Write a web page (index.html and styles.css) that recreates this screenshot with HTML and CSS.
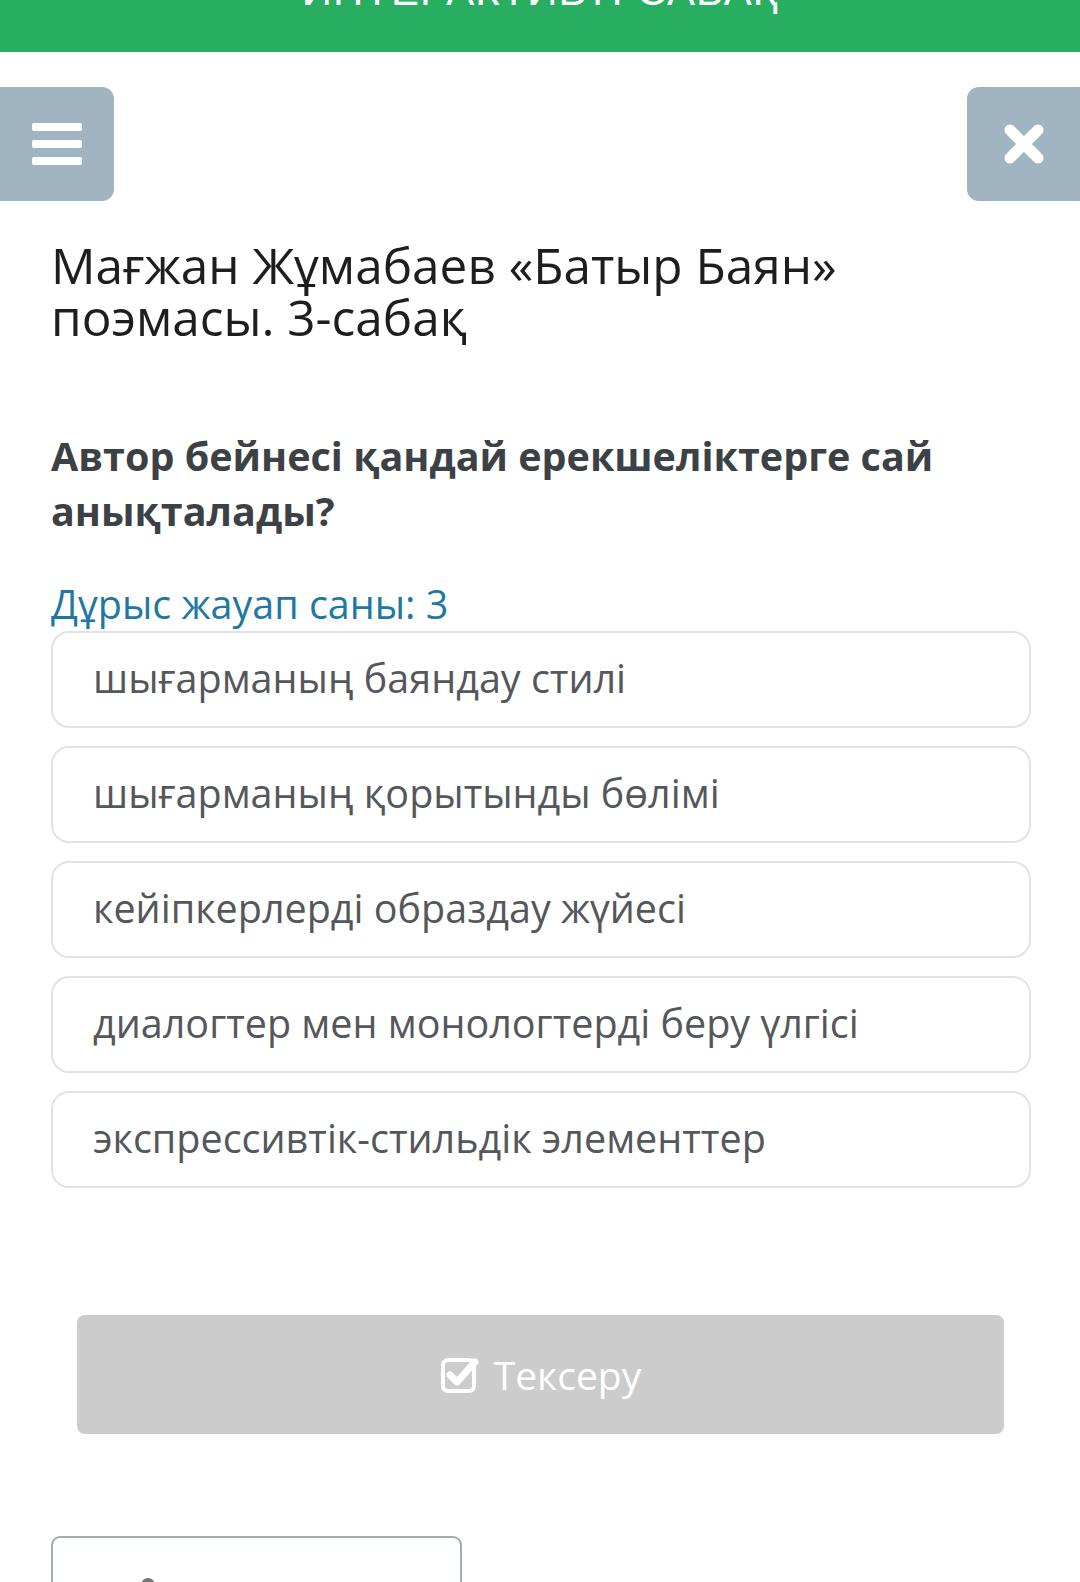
FILE: index.html
```html
<!DOCTYPE html>
<html>
<head>
<meta charset="utf-8">
<link rel="stylesheet" href="styles.css">
</head>
<body>
<div class="topbar"><span class="topbar-title">ИНТЕРАКТИВТІ САБАҚ</span></div>

<div class="nav-row">
	<div class="nav-btn menu-btn">
		<span class="bar"></span>
		<span class="bar"></span>
		<span class="bar"></span>
	</div>
	<div class="nav-btn close-btn">
		<svg width="44" height="44" viewBox="0 0 44 44">
			<path d="M8 8 L36 36 M36 8 L8 36" stroke="#fff" stroke-width="11" stroke-linecap="round"/>
		</svg>
	</div>
</div>

<div class="content">
	<h1 class="lesson-title">Мағжан Жұмабаев «Батыр Баян» поэмасы. 3-сабақ</h1>

	<h2 class="question">Автор бейнесі қандай ерекшеліктерге сай анықталады?</h2>

	<p class="counter">Дұрыс жауап саны: 3</p>

	<div class="answers">
		<div class="answer">шығарманың баяндау стилі</div>
		<div class="answer">шығарманың қорытынды бөлімі</div>
		<div class="answer">кейіпкерлерді образдау жүйесі</div>
		<div class="answer">диалогтер мен монологтерді беру үлгісі</div>
		<div class="answer">экспрессивтік-стильдік элементтер</div>
	</div>

	<div class="check-wrap">
		<div class="check-btn">
			<svg width="40" height="40" viewBox="0 0 40 40">
				<rect x="3" y="5" width="31" height="31" rx="5" fill="none" stroke="#fff" stroke-width="4"/>
				<path d="M10 20 L17 27 L35 7" fill="none" stroke="#fff" stroke-width="7" stroke-linecap="round" stroke-linejoin="round"/>
			</svg>
			<span>Тексеру</span>
		</div>
	</div>

	<div class="bottom-card">
		<span class="card-icon"></span>
	</div>
</div>
</body>
</html>
```

FILE: styles.css
```css
html, body{
	margin: 0;
	padding: 0;
	background: #fff;
	font-family: "Open Sans", "Noto Sans", sans-serif;
	overflow: hidden;
	height: 1582px;
}
.topbar{
	height: 52px;
	background-color: #27ae60;
	position: relative;
	overflow: hidden;
}
.topbar-title{
	position: absolute;
	left: 0;
	right: 0;
	bottom: 40px;
	text-align: center;
	color: #fff;
	font-family: "Liberation Sans", Arial, sans-serif;
	font-size: 42px;
	line-height: 42px;
	letter-spacing: 1px;
}
.nav-row{
	display: flex;
	justify-content: space-between;
	margin-top: 35px;
}
.nav-btn{
	width: 114px;
	height: 114px;
	background-color: #a0b4c1;
	display: flex;
	align-items: center;
	justify-content: center;
}
.menu-btn{
	border-radius: 0 12px 12px 0;
	flex-direction: column;
	gap: 9px;
}
.menu-btn .bar{
	display: block;
	width: 50px;
	height: 8px;
	background: #fff;
	border-radius: 2px;
}
.close-btn{
	width: 113px;
	border-radius: 12px 0 0 12px;
}
.content{
	padding: 0 49px 0 51px;
}
.lesson-title{
	margin: 38px 0 0;
	font-size: 49.5px;
	font-weight: 400;
	line-height: 52px;
	color: #1e1e1e;
	width: 880px;
}
.question{
	margin: 86px 0 0;
	font-size: 39.5px;
	font-weight: 700;
	line-height: 55px;
	color: #3c4146;
}
.counter{
	margin: 38px 0 0;
	font-size: 39.5px;
	line-height: 54px;
	color: #1f78a4;
}
.answers{
	display: flex;
	flex-direction: column;
	gap: 18px;
}
.answer{
	box-sizing: border-box;
	height: 97px;
	border: 2px solid #e3e3e3;
	border-radius: 18px;
	padding: 0 0 4px 40px;
	display: flex;
	align-items: center;
	font-size: 39.5px;
	color: #54575b;
}
.check-wrap{
	padding: 127px 27px 0 26px;
}
.check-btn{
	height: 119px;
	background-color: #cccccc;
	border-radius: 8px;
	display: flex;
	align-items: center;
	justify-content: center;
	gap: 14px;
	color: #fff;
	font-size: 39px;
}
.bottom-card{
	margin-top: 102px;
	width: 407px;
	height: 80px;
	border: 2px solid #a3adac;
	border-radius: 9px;
	position: relative;
}
.card-icon{
	position: absolute;
	left: 88px;
	top: 40px;
	width: 14px;
	height: 14px;
	border-radius: 50%;
	background: #777;
}
```
